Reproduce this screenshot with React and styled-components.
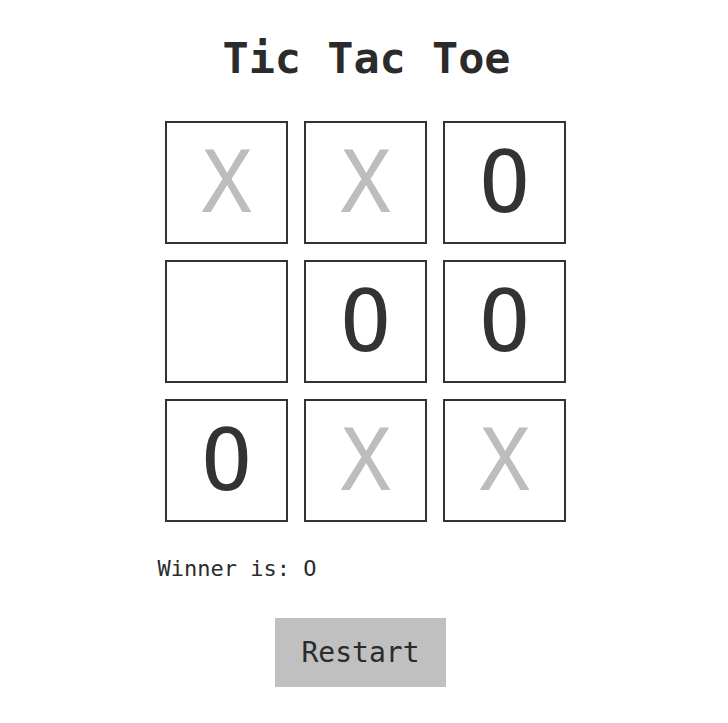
import React, { useState } from 'react'
import styled, { createGlobalStyle } from 'styled-components'

const GlobalStyle = createGlobalStyle`
  body {
    margin: 0;
    background: #ffffff;
    font-family: "DejaVu Sans Mono", "Liberation Mono", monospace;
    color: #2b2b2b;
  }
`

const Page = styled.div`
  display: flex;
  flex-direction: column;
  align-items: center;
  padding: 37px 0 0 3px;
`

const Title = styled.h1`
  margin: 0 0 0 2px;
  font-size: 43.5px;
  line-height: 43px;
  font-weight: bold;
  color: #2b2b2b;
`

const Board = styled.div`
  display: grid;
  grid-template-columns: repeat(3, 123px);
  grid-auto-rows: 123px;
  gap: 16px;
  margin-top: 41px;
`

const Cell = styled.button`
  box-sizing: border-box;
  border: 2px solid #333333;
  background: #ffffff;
  padding: 0;
  font-family: inherit;
  font-size: 85px;
  line-height: 119px;
  color: ${p => (p.$mark === 'X' ? '#bdbdbd' : '#333333')};
  cursor: pointer;
`

const Status = styled.div`
  align-self: stretch;
  width: 416px;
  margin: 36px auto 0;
  font-size: 22px;
  line-height: 22px;
  color: #2b2b2b;
`

const RestartButton = styled.button`
  margin: 38px 10px 0 0;
  width: 171px;
  height: 69px;
  border: none;
  background: #c0c0c0;
  font-family: inherit;
  font-size: 28px;
  color: #2b2b2b;
  cursor: pointer;
`

const initial = ['X', 'X', 'O', '', 'O', 'O', 'O', 'X', 'X']

export default function App() {
  const [cells, setCells] = useState(initial)

  return (
    <Page>
      <GlobalStyle />
      <Title>Tic Tac Toe</Title>
      <Board>
        {cells.map((mark, i) => (
          <Cell key={i} $mark={mark}>{mark}</Cell>
        ))}
      </Board>
      <Status>Winner is: O</Status>
      <RestartButton onClick={() => setCells(initial)}>Restart</RestartButton>
    </Page>
  )
}
